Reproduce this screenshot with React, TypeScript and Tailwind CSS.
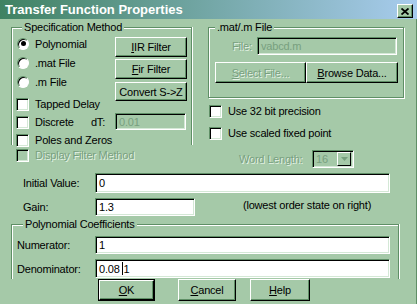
import React from "react";

// raised 3d button face
function Btn({ children, className = "", disabled = false }: { children: React.ReactNode; className?: string; disabled?: boolean }) {
  return (
    <div
      className={
        "flex items-center justify-center whitespace-nowrap border border-t-white border-l-white border-r-black border-b-black shadow-[inset_-1px_-1px_0_#5f8f66] " +
        (disabled ? "text-[#78a07f] [text-shadow:1px_1px_0_#e4f2e5] " : "text-black ") +
        className
      }
    >
      {children}
    </div>
  );
}

// sunken edit box
function Field({ children, className = "", disabled = false }: { children?: React.ReactNode; className?: string; disabled?: boolean }) {
  return (
    <div
      className={
        "flex items-center pl-[3px] border border-t-[#5f8f66] border-l-[#5f8f66] border-r-white border-b-white shadow-[inset_1px_1px_0_#000,inset_-1px_-1px_0_#d4e8d6] " +
        (disabled ? "bg-[#a5c9a8] text-[#78a07f] " : "bg-white text-black ") +
        className
      }
    >
      {children}
    </div>
  );
}

function Check({ disabled = false }: { disabled?: boolean }) {
  return (
    <div
      className={
        "w-[13px] h-[13px] shrink-0 border border-t-[#5f8f66] border-l-[#5f8f66] border-r-white border-b-white shadow-[inset_1px_1px_0_#000,inset_-1px_-1px_0_#d4e8d6] " +
        (disabled ? "bg-[#a5c9a8]" : "bg-white")
      }
    />
  );
}

function Radio({ on = false }: { on?: boolean }) {
  return (
    <div className="ml-px w-[12px] h-[12px] shrink-0 rounded-full border border-t-[#5f8f66] border-l-[#5f8f66] border-r-white border-b-white bg-white shadow-[inset_1px_1px_0_#000] flex items-center justify-center">
      {on && <div className="w-[5px] h-[5px] rounded-full bg-black" />}
    </div>
  );
}

const dim = "text-[#78a07f] [text-shadow:1px_1px_0_#e4f2e5]";

export default function App() {
  return (
    <div className="w-[417px] h-[304px] overflow-hidden bg-[#a5c9a8] text-[11px] leading-[14px] tracking-[-0.2px] text-black font-['Liberation_Sans',Arial,sans-serif]">
      {/* title bar */}
      <div className="h-[19px] flex items-start bg-gradient-to-r from-[#3f8262] to-[#a8ccee]">
        <div className="pl-[5px] pt-[3px] font-bold text-[13px] leading-[14px] tracking-normal text-white">
          Transfer Function Properties
        </div>
        <div className="ml-auto mr-[4px] mt-[4px] w-[16px] h-[14px] flex items-center justify-center bg-[#a5c9a8] border border-t-white border-l-white border-r-black border-b-black shadow-[inset_-1px_-1px_0_#5f8f66]">
          <svg width="8" height="7" viewBox="0 0 8 7">
            <path d="M0.5 0.5 L7.5 6.5 M7.5 0.5 L0.5 6.5" stroke="#000" strokeWidth="1.8" />
          </svg>
        </div>
      </div>

      <div className="h-[285px] border-r border-r-[#5f8f66] flex flex-col">
        {/* upper part */}
        <div className="flex pt-px">
          <div className="ml-[11px] w-[181px] flex flex-col">
            <fieldset className="h-[125px] border border-b-0 border-[#5f8f66] shadow-[inset_1px_1px_0_#fff,1px_0_0_#fff] pl-[4px]">
              <legend className="ml-[6px] px-[2px] bg-[#a5c9a8]">Specification Method</legend>
              <div className="flex">
                <div className="w-[99px] flex flex-col">
                  <div className="h-[19px] flex items-center gap-[6px]">
                    <Radio on />
                    <span>Polynomial</span>
                  </div>
                  <div className="h-[19px] flex items-center gap-[6px]">
                    <Radio />
                    <span>.mat File</span>
                  </div>
                  <div className="h-[19px] flex items-center gap-[6px]">
                    <Radio />
                    <span>.m File</span>
                  </div>
                  <div className="mt-[4px] h-[18px] flex items-center gap-[6px]">
                    <Check />
                    <span>Tapped Delay</span>
                  </div>
                  <div className="h-[18px] flex items-center gap-[6px] pr-[10px]">
                    <Check />
                    <span>Discrete</span>
                    <span className="ml-auto">dT:</span>
                  </div>
                  <div className="h-[18px] flex items-center gap-[6px] whitespace-nowrap">
                    <Check />
                    <span>Poles and Zeros</span>
                  </div>
                </div>
                <div className="w-[72px] flex flex-col pt-[3px]">
                  <Btn className="h-[20px]">
                    <span><u>I</u>IR Filter</span>
                  </Btn>
                  <Btn className="mt-[2px] h-[20px]">
                    <span><u>F</u>ir Filter</span>
                  </Btn>
                  <Btn className="mt-[3px] h-[19px]">Convert S-&gt;Z</Btn>
                  <Field disabled className="mt-[12px] h-[17px] w-[71px]">0.01</Field>
                </div>
              </div>
            </fieldset>
            <div className={"mt-[2px] pl-[5px] h-[16px] flex items-center gap-[6px] whitespace-nowrap " + dim}>
              <Check disabled />
              <span>Display Filter Method</span>
            </div>
          </div>

          <div className="ml-[16px] w-[196px] flex flex-col">
            <fieldset className="h-[78px] border border-[#5f8f66] shadow-[inset_1px_1px_0_#fff,1px_1px_0_#fff]">
              <legend className="ml-[6px] px-[2px] bg-[#a5c9a8]">.mat/.m File</legend>
              <div className="mt-[3px] pl-[23px] flex items-center">
                <span className={"w-[25px] " + dim}>File:</span>
                <Field disabled className="w-[140px] h-[18px]">vabcd.m</Field>
              </div>
              <div className="mt-[7px] pl-[6px] flex">
                <Btn disabled className="w-[91px] h-[21px]">
                  <span><u>S</u>elect File...</span>
                </Btn>
                <Btn className="w-[92px] h-[21px]">
                  <span><u>B</u>rowse Data...</span>
                </Btn>
              </div>
            </fieldset>
            <div className="mt-[4px] h-[18px] pl-px flex items-center gap-[6px]">
              <Check />
              <span>Use 32 bit precision</span>
            </div>
            <div className="mt-[4px] h-[18px] pl-px flex items-center gap-[6px]">
              <Check />
              <span>Use scaled fixed point</span>
            </div>
            <div className="mt-[8px] h-[18px] pl-[31px] flex items-center">
              <span className={"w-[73px] whitespace-nowrap " + dim}>Word Length:</span>
              <Field disabled className="w-[42px] h-[18px] pl-[3px] pr-[2px]">
                <span>16</span>
                <div className="ml-auto w-[14px] h-[14px] flex items-center justify-center bg-[#a5c9a8] border border-t-white border-l-white border-r-black border-b-black">
                  <svg width="7" height="4" viewBox="0 0 7 4">
                    <path d="M0 0 H7 L3.5 4 Z" fill="#78a07f" />
                  </svg>
                </div>
              </Field>
            </div>
          </div>
        </div>

        {/* initial value */}
        <div className="mt-[5px] flex items-center pl-[23px]">
          <span className="w-[72px]">Initial Value:</span>
          <Field className="w-[295px] h-[20px]">0</Field>
        </div>

        {/* gain */}
        <div className="mt-[5px] flex items-center pl-[23px]">
          <span className="w-[72px]">Gain:</span>
          <Field className="w-[100px] h-[18px]">1.3</Field>
          <span className="ml-[48px] -mt-[5px]">(lowest order state on right)</span>
        </div>

        {/* polynomial coefficients */}
        <fieldset className="mt-px ml-[11px] w-[388px] h-[62px] border border-b-0 border-[#5f8f66] shadow-[inset_1px_1px_0_#fff,1px_0_0_#fff] pl-[5px]">
          <legend className="ml-[6px] px-[2px] bg-[#a5c9a8]">Polynomial Coefficients</legend>
          <div className="mt-[5px] flex items-center">
            <span className="w-[78px]">Numerator:</span>
            <Field className="w-[295px] h-[18px]">1</Field>
          </div>
          <div className="mt-[5px] flex items-center">
            <span className="w-[78px]">Denominator:</span>
            <Field className="w-[295px] h-[19px]">
              <span>0.08&nbsp;</span>
              <span className="w-px h-[13px] bg-black" />
              <span>1</span>
            </Field>
          </div>
        </fieldset>

        {/* dialog buttons */}
        <div className="flex pl-[98px]">
          <div className="w-[57px] h-[22px] border border-black flex">
            <Btn className="w-full h-full">
              <span><u>O</u>K</span>
            </Btn>
          </div>
          <Btn className="ml-[23px] w-[58px] h-[22px]">
            <span><u>C</u>ancel</span>
          </Btn>
          <Btn className="ml-[14px] w-[60px] h-[22px]">
            <span><u>H</u>elp</span>
          </Btn>
        </div>
      </div>
    </div>
  );
}
